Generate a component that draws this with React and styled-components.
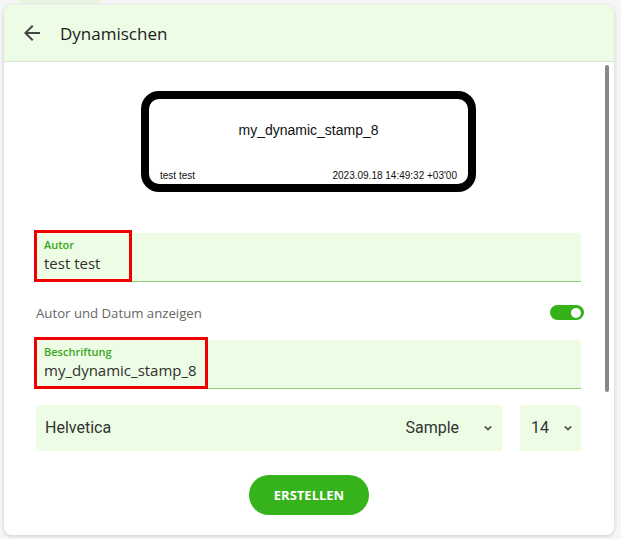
import React from 'react';
import styled, { createGlobalStyle } from 'styled-components';

const GlobalStyle = createGlobalStyle`
  html, body {
    margin: 0;
    padding: 0;
    background: #f6f6f6;
    font-family: "Open Sans", "Noto Sans", sans-serif;
  }
`;

export default function App() {
  return (
    <>
      <GlobalStyle />
      <Page>
        <BackdropPill />
        <Dialog>
          <Header>
            <BackButton aria-label="Zurück">
              <svg width="24" height="24" viewBox="0 0 24 24">
                <path
                  fill="#454545"
                  d="M20 11H7.83l5.59-5.59L12 4l-8 8 8 8 1.41-1.41L7.83 13H20v-2z"
                />
              </svg>
            </BackButton>
            <Title>Dynamischen</Title>
          </Header>

          <Body>
            <Stamp>
              <StampName>my_dynamic_stamp_8</StampName>
              <StampFooter>
                <span>test test</span>
                <span>2023.09.18 14:49:32 +03'00</span>
              </StampFooter>
            </Stamp>

            <Field $gap={41}>
              <Highlight $width={98} />
              <FieldLabel>Autor</FieldLabel>
              <FieldValue>test test</FieldValue>
            </Field>

            <ToggleRow>
              <ToggleLabel>Autor und Datum anzeigen</ToggleLabel>
              <Switch $on>
                <Knob />
              </Switch>
            </ToggleRow>

            <Field $gap={0}>
              <Highlight $width={174} />
              <FieldLabel>Beschriftung</FieldLabel>
              <FieldValue>my_dynamic_stamp_8</FieldValue>
            </Field>

            <SelectRow>
              <Select $grow>
                <SelectText>Helvetica</SelectText>
                <SelectValue>Sample</SelectValue>
                <Chevron />
              </Select>
              <Select $small>
                <SelectValue $small>14</SelectValue>
                <Chevron />
              </Select>
            </SelectRow>

            <ScrollThumb />
          </Body>

          <Footer>
            <CreateButton>ERSTELLEN</CreateButton>
          </Footer>
        </Dialog>
      </Page>
    </>
  );
}

function Chevron() {
  return (
    <ChevronIcon width="10" height="10" viewBox="0 0 10 10">
      <path d="M1.8 3.4 5 6.6 8.2 3.4" fill="none" stroke="#555" strokeWidth="1.7" />
    </ChevronIcon>
  );
}

const Page = styled.div`
  position: relative;
  width: 621px;
  height: 539px;
  padding: 5px 7px 4px 4px;
  box-sizing: border-box;
  overflow: hidden;
  background: #f6f6f6;
`;

const BackdropPill = styled.div`
  position: absolute;
  left: 14px;
  top: -20px;
  width: 92px;
  height: 24px;
  border-radius: 12px;
  background: #e6f5df;
`;

const Dialog = styled.section`
  position: relative;
  display: flex;
  flex-direction: column;
  height: 100%;
  background: #ffffff;
  border-radius: 8px;
  overflow: hidden;
  box-shadow: 0 1px 4px rgba(0, 0, 0, 0.18);
`;

const Header = styled.header`
  display: flex;
  align-items: center;
  gap: 16px;
  height: 56px;
  padding-left: 16px;
  background: #edfce5;
  border-bottom: 1px solid #d5e6cd;
  flex-shrink: 0;
`;

const BackButton = styled.button`
  display: flex;
  padding: 0;
  border: none;
  background: none;
`;

const Title = styled.h1`
  margin: 0;
  font-size: 17px;
  font-weight: 400;
  color: #1c1c1c;
`;

const Body = styled.div`
  position: relative;
  display: flex;
  flex-direction: column;
  height: 389px;
  padding: 29px 33px 0 32px;
  box-sizing: border-box;
  overflow: hidden;
  flex-shrink: 0;

  & > * {
    flex-shrink: 0;
  }
`;

const Stamp = styled.div`
  align-self: center;
  display: flex;
  flex-direction: column;
  width: 335px;
  height: 101px;
  box-sizing: border-box;
  border: 8px solid #000;
  border-radius: 18px;
  padding: 0 11px 3px;
  font-family: "Liberation Sans", Arial, sans-serif;
  color: #111;
`;

const StampName = styled.div`
  flex: 1;
  display: flex;
  align-items: center;
  justify-content: center;
  font-size: 14px;
  padding-bottom: 10px;
`;

const StampFooter = styled.div`
  display: flex;
  justify-content: space-between;
  font-size: 10px;
`;

const Field = styled.div`
  position: relative;
  display: flex;
  flex-direction: column;
  height: 49px;
  box-sizing: border-box;
  margin-top: ${(p) => p.$gap}px;
  padding: 4px 8px 0;
  background: #edfce5;
  border-radius: 4px 4px 0 0;
  border-bottom: 1px solid #8cce78;
`;

const Highlight = styled.div`
  position: absolute;
  left: -2px;
  top: -3px;
  width: ${(p) => p.$width}px;
  height: 52px;
  box-sizing: border-box;
  border: 3px solid #ee0000;
`;

const FieldLabel = styled.span`
  font-size: 11px;
  font-weight: 600;
  color: #3aa620;
  line-height: 16px;
`;

const FieldValue = styled.span`
  font-size: 15px;
  color: #303030;
  line-height: 21px;
`;

const ToggleRow = styled.div`
  display: flex;
  align-items: center;
  justify-content: space-between;
  height: 58px;
  padding-top: 3px;
  box-sizing: border-box;
  margin-right: -3px;
`;

const ToggleLabel = styled.span`
  font-size: 13.2px;
  color: #666;
  padding-top: 1px;
`;

const Switch = styled.div`
  display: flex;
  align-items: center;
  justify-content: ${(p) => (p.$on ? 'flex-end' : 'flex-start')};
  width: 34px;
  height: 15px;
  padding: 0 3px;
  box-sizing: border-box;
  border-radius: 8px;
  background: ${(p) => (p.$on ? '#35b11a' : '#bbb')};
`;

const Knob = styled.span`
  width: 10px;
  height: 10px;
  border-radius: 50%;
  background: #fff;
`;

const SelectRow = styled.div`
  display: flex;
  gap: 18px;
  margin-top: 16px;
`;

const Select = styled.div`
  display: flex;
  align-items: center;
  flex: ${(p) => (p.$grow ? '1 1 auto' : '0 0 60px')};
  height: 56px;
  padding: ${(p) => (p.$small ? '0 8px 10px 11px' : '0 9px 10px 9px')};
  box-sizing: border-box;
  background: #edfce5;
  border-radius: 4px 4px 0 0;
  border-bottom: 1px solid #8cce78;
  font-family: Roboto, "Liberation Sans", sans-serif;
  color: #333;
`;

const SelectText = styled.span`
  flex: 1;
  font-size: 16px;
`;

const SelectValue = styled.span`
  font-size: 16px;
  margin-right: ${(p) => (p.$small ? 14 : 24)}px;
`;

const ChevronIcon = styled.svg`
  flex-shrink: 0;
`;

const ScrollThumb = styled.div`
  position: absolute;
  right: 5px;
  top: 3px;
  width: 4px;
  height: 327px;
  border-radius: 2px;
  background: #888;
`;

const Footer = styled.footer`
  display: flex;
  justify-content: center;
  padding-top: 24px;
`;

const CreateButton = styled.button`
  width: 120px;
  height: 40px;
  border: none;
  border-radius: 20px;
  background: #36b21b;
  color: #fff;
  font-family: "Open Sans", sans-serif;
  font-size: 13px;
  font-weight: 700;
`;
